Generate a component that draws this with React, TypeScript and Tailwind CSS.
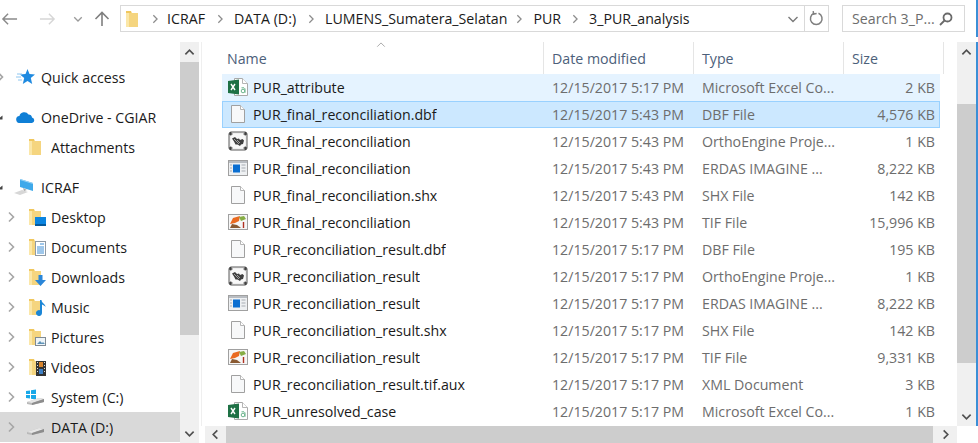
import React from 'react';

const files = [
  { name: 'PUR_attribute', date: '12/15/2017 5:17 PM', type: 'Microsoft Excel Co...', size: '2 KB', icon: 'xls' },
  { name: 'PUR_final_reconciliation.dbf', date: '12/15/2017 5:43 PM', type: 'DBF File', size: '4,576 KB', icon: 'doc' },
  { name: 'PUR_final_reconciliation', date: '12/15/2017 5:43 PM', type: 'OrthoEngine Proje...', size: '1 KB', icon: 'ortho' },
  { name: 'PUR_final_reconciliation', date: '12/15/2017 5:43 PM', type: 'ERDAS IMAGINE ...', size: '8,222 KB', icon: 'erdas' },
  { name: 'PUR_final_reconciliation.shx', date: '12/15/2017 5:43 PM', type: 'SHX File', size: '142 KB', icon: 'doc' },
  { name: 'PUR_final_reconciliation', date: '12/15/2017 5:43 PM', type: 'TIF File', size: '15,996 KB', icon: 'tif' },
  { name: 'PUR_reconciliation_result.dbf', date: '12/15/2017 5:17 PM', type: 'DBF File', size: '195 KB', icon: 'doc' },
  { name: 'PUR_reconciliation_result', date: '12/15/2017 5:17 PM', type: 'OrthoEngine Proje...', size: '1 KB', icon: 'ortho' },
  { name: 'PUR_reconciliation_result', date: '12/15/2017 5:17 PM', type: 'ERDAS IMAGINE ...', size: '8,222 KB', icon: 'erdas' },
  { name: 'PUR_reconciliation_result.shx', date: '12/15/2017 5:17 PM', type: 'SHX File', size: '142 KB', icon: 'doc' },
  { name: 'PUR_reconciliation_result', date: '12/15/2017 5:17 PM', type: 'TIF File', size: '9,331 KB', icon: 'tif' },
  { name: 'PUR_reconciliation_result.tif.aux', date: '12/15/2017 5:17 PM', type: 'XML Document', size: '3 KB', icon: 'doc' },
  { name: 'PUR_unresolved_case', date: '12/15/2017 5:17 PM', type: 'Microsoft Excel Co...', size: '1 KB', icon: 'xls' },
];

const Chev = ({ dir, color = '#7a7a7a', size = 12, width = 1.5 }: { dir: 'left' | 'right' | 'up' | 'down'; color?: string; size?: number; width?: number }) => {
  const d = { right: 'M4 1.5 8.5 6 4 10.5', left: 'M8 1.5 3.5 6 8 10.5', up: 'M1.5 8 6 3.5 10.5 8', down: 'M1.5 4 6 8.5 10.5 4' }[dir];
  return (
    <svg width={size} height={size} viewBox="0 0 12 12" fill="none" stroke={color} strokeWidth={width} className="shrink-0">
      <path d={d} />
    </svg>
  );
};

const FileIcon = ({ kind }: { kind: string }) => {
  if (kind === 'doc') {
    return (
      <svg width="18" height="20" viewBox="0 0 18 20">
        <path d="M2.500 1.500h9l4 4v13h-13z" fill="#f7f8f9" stroke="#a0a0a0" />
        <path d="M11.500 1.500v4h4" fill="#fff" stroke="#b5b5b5" />
      </svg>
    );
  }
  if (kind === 'xls') {
    return (
      <svg width="22" height="20" viewBox="0 0 22 20">
        <path d="M7.500 1.500h8l5 5v12h-13z" fill="#fff" stroke="#a9a9a9" />
        <path d="M15.500 1.500v5h5" fill="#fff" stroke="#b5b5b5" />
        <path d="M1 4l11-1.500v15L1 16z" fill="#1e7145" />
        <path d="M4 7l4 6M8 7l-4 6" stroke="#fff" strokeWidth="1.400" />
        <circle cx="16" cy="14" r="1.800" fill="none" stroke="#6cb58d" />
        <path d="M14.500 10.800h2.500l1 1v4" fill="none" stroke="#6cb58d" />
      </svg>
    );
  }
  if (kind === 'ortho') {
    return (
      <svg width="20" height="20" viewBox="0 0 20 20">
        <rect x="1" y="1" width="18" height="18" rx="2" fill="#eeeeee" stroke="#5a5a5a" />
        <rect x="3" y="3" width="14" height="14" fill="#f8f8f8" />
        <path d="M4 7.500l3-1.500 2 2 2-.5 1 1.500 2.500-1 1.500 1.500-1 3.500-2 .5-1 1.500-2.500-1.500-2 0-1.500-3z" fill="#3f3f3f" />
        <path d="M6 8l5 5M9 9l3 3" stroke="#b8b8b8" strokeWidth=".8" />
        <path d="M1 3h3.500M2.800 1v3.500M15.500 3H19M17.200 1v3.500M1 17h3.500M2.800 15.500V19M15.500 17H19M17.200 15.500V19" stroke="#222" />
      </svg>
    );
  }
  if (kind === 'erdas') {
    return (
      <svg width="20" height="16" viewBox="0 0 20 16">
        <rect x=".5" y=".5" width="19" height="15" fill="#eef0f2" stroke="#a0a0a0" />
        <rect x="1" y="1" width="18" height="2" fill="#b9bdc2" />
        <rect x="5" y="4.500" width="7" height="8" fill="#0a6ed1" />
        <path d="M2 5h2M2 8h2M2 11h2M13.500 5h4M13.500 8h4M13.500 11h4" stroke="#a8adb3" />
      </svg>
    );
  }
  return (
    <svg width="20" height="16" viewBox="0 0 20 16">
      <rect x=".5" y=".5" width="19" height="15" fill="#f6f6f6" stroke="#a0a0a0" />
      <path d="M2 10l3-6 7-2-1 5-4 2z" fill="#ea6a20" />
      <path d="M11 3l5-1 2 3-5 2z" fill="#86ad45" />
      <path d="M2 14l2-4 5 1 4 3z" fill="#8a5a32" />
      <path d="M15.500 8v6" stroke="#b03020" strokeWidth="1.400" />
    </svg>
  );
};

const Folder = () => (
  <svg width="14" height="18" viewBox="0 0 14 18" className="shrink-0">
    <path d="M0 1h5l1 2h6v14H0z" fill="#f5d57f" />
    <path d="M0 3h3v14H0z" fill="#fbe7a8" />
    <path d="M0 1h5v2H0z" fill="#f0c75e" />
  </svg>
);

const NavIcon = ({ overlay }: { overlay: React.ReactNode }) => (
  <div className="relative w-[16px] h-[18px]">
    <Folder />
    <div className="absolute right-[-1px] bottom-0">{overlay}</div>
  </div>
);

const overlays: Record<string, React.ReactNode> = {
  Desktop: (
    <svg width="11" height="9" viewBox="0 0 11 9"><rect width="11" height="8" fill="#0a84e0" /><rect y="7" width="11" height="2" fill="#055a9c" /></svg>
  ),
  Documents: (
    <svg width="11" height="15" viewBox="0 0 11 15"><rect x=".5" y=".5" width="10" height="14" fill="#fff" stroke="#8f9aa5" /><path d="M5 3h4M2 6h7M2 8h7M2 10h7M2 12h7" stroke="#3f8fd6" /></svg>
  ),
  Downloads: (
    <svg width="11" height="11" viewBox="0 0 11 11"><path d="M3.500 0h4v5H11L5.500 11 0 5h3.500z" fill="#2a86d8" /></svg>
  ),
  Music: (
    <svg width="10" height="17" viewBox="0 0 10 17"><path d="M4 1h1.500c0 3 4 4 4 7-1-1.500-2-2-3.500-2.500V14a3 3 0 1 1-2-2.800z" fill="#1b86d6" /></svg>
  ),
  Pictures: (
    <svg width="11" height="9" viewBox="0 0 11 9"><rect x=".5" y=".5" width="10" height="8" fill="#eef4f8" stroke="#7f8a94" /><path d="M2 7l3-3 2 2 1-1 2 2z" fill="#5f93b8" /></svg>
  ),
  Videos: (
    <svg width="10" height="15" viewBox="0 0 10 15"><rect width="10" height="15" fill="#333" /><path d="M1 1h1v1H1zM8 1h1v1H8zM1 4h1v1H1zM8 4h1v1H8zM1 7h1v1H1zM8 7h1v1H8zM1 10h1v1H1zM8 10h1v1H8z" fill="#ddd" /><rect x="3" y="1" width="4" height="5" fill="#d8842c" /><rect x="3" y="8" width="4" height="5" fill="#3d7fc4" /></svg>
  ),
};

const Drive = ({ windows }: { windows?: boolean }) => (
  <svg width="20" height="18" viewBox="0 0 20 18" className="shrink-0">
    {windows && <path d="M1 3l4-.6V6H1zM6 2.300l5-.8V6H6zM1 7h4v3.600l-4-.6zM6 7h5v4.500l-5-.8z" fill="#19a8e8" />}
    <path d="M2 14l12-4 5 1v3l-12 3-5-1z" fill="#b9b9b9" />
    <path d="M2 14l5 1 12-4-5-1z" fill="#e6e6e6" />
    <path d="M7 15v2l12-3v-3z" fill="#8d8d8d" />
  </svg>
);

const SideRow = ({ label, level, icon, chev, selected, mt }: { label: string; level: 0 | 1; icon: React.ReactNode; chev?: 'right' | 'open'; selected?: boolean; mt?: boolean }) => (
  <div className={`flex items-center h-[30px] ${mt ? 'mt-[10px]' : ''} ${selected ? 'bg-[#d9d9d9]' : ''}`}>
    <div className={`flex items-center justify-center shrink-0 ${level === 0 ? 'w-[6px] ml-[-3px]' : 'w-[12px] ml-[5px]'}`}>
      {chev === 'right' && <Chev dir="right" color="#a6a6a6" size={12} width={1.6} />}
      {chev === 'open' && (
        <svg width="7" height="7" viewBox="0 0 7 7" className="shrink-0"><path d="M.5 5.500l5-4v4z" fill="#444" /></svg>
      )}
    </div>
    <div className={`flex items-center shrink-0 ${level === 0 ? 'w-[38px] pl-[13px]' : 'w-[34px] pl-[12px]'}`}>{icon}</div>
    <span className="truncate pt-[2px]">{label}</span>
  </div>
);

const App = () => {
  return (
    <div
      className="w-[978px] h-[443px] bg-white overflow-hidden flex flex-col text-[14.2px] text-[#1a1a1a]"
      style={{ fontFamily: '"Open Sans", "Noto Sans", sans-serif' }}
    >
      {/* toolbar */}
      <div className="h-[42px] flex items-start pt-[5px] shrink-0">
        <div className="w-[120px] h-[27px] flex items-center shrink-0">
          <svg width="17" height="14" viewBox="0 0 18 14" className="ml-[1px]" fill="none" stroke="#8a8a8a" strokeWidth="1.500"><path d="M17 7H2M7.500 1.500 2 7l5.500 5.500" /></svg>
          <svg width="17" height="14" viewBox="0 0 18 14" className="ml-[21px]" fill="none" stroke="#d6d6d6" strokeWidth="1.500"><path d="M1 7h15M10.500 1.500 16 7l-5.500 5.500" /></svg>
          <div className="ml-[17px]"><Chev dir="down" color="#9a9a9a" size={10} width={1.6} /></div>
          <svg width="16" height="16" viewBox="0 0 16 16" className="ml-[11px]" fill="none" stroke="#7f7f7f" strokeWidth="1.600"><path d="M8 15V2M1.500 8 8 1.500 14.500 8" /></svg>
        </div>
        <div className="w-[709px] h-[27px] border border-[#d9d9d9] flex items-center shrink-0">
          <div className="ml-[5px] w-[12px]"><Folder /></div>
          <div className="ml-[12px]"><Chev dir="right" color="#8c8c8c" size={10} width={1.500} /></div>
          <span className="ml-[7px]">ICRAF</span>
          <div className="ml-[10px]"><Chev dir="right" color="#8c8c8c" size={10} width={1.500} /></div>
          <span className="ml-[9px]">DATA (D:)</span>
          <div className="ml-[10px]"><Chev dir="right" color="#8c8c8c" size={10} width={1.500} /></div>
          <span className="ml-[9px]">LUMENS_Sumatera_Selatan</span>
          <div className="ml-[7px]"><Chev dir="right" color="#8c8c8c" size={10} width={1.500} /></div>
          <span className="ml-[9px]">PUR</span>
          <div className="ml-[9px]"><Chev dir="right" color="#8c8c8c" size={10} width={1.500} /></div>
          <span className="ml-[9px]">3_PUR_analysis</span>
          <div className="ml-auto mr-[5px]"><Chev dir="down" color="#7a7a7a" size={12} width={1.4} /></div>
          <div className="w-[24px] h-full border-l border-[#d9d9d9] flex items-center justify-center">
            <svg width="15" height="15" viewBox="0 0 15 15" fill="none" stroke="#7f7f7f" strokeWidth="1.500">
              <path d="M9.500 2.300a5.800 5.800 0 1 1-4.500 0" />
              <path d="M4.500 0v3h3" transform="rotate(-10 5 2)" />
            </svg>
          </div>
        </div>
        <div className="ml-[13px] w-[123px] h-[27px] border border-[#d9d9d9] flex items-center pl-[9px] text-[#6d6d6d] shrink-0">
          <span>Search 3_P...</span>
          <svg width="14" height="14" viewBox="0 0 14 14" className="ml-auto mr-[11px]" fill="none" stroke="#6a6a6a" strokeWidth="1.800"><circle cx="8.500" cy="5.500" r="4" /><path d="M5.500 8.500 1 13" /></svg>
        </div>
        <div className="ml-auto w-[2px] h-[37px] mt-[-5px] bg-[#3c8fd6]" />
      </div>

      <div className="flex-1 flex min-h-0">
        {/* nav pane */}
        <div className="w-[180px] shrink-0 pt-[20px] overflow-hidden">
          <SideRow
            label="Quick access"
            level={0}
            chev="right"
            icon={
              <svg width="19" height="18" viewBox="0 0 19 18"><path d="M11.500 1l2 5 5.500.4-4.200 3.500L16.200 16l-4.700-3-4.700 3 1.400-6.100L4 6.400 9.500 6z" fill="#1f8ae0" /><path d="M1 6h5M0 9h5M2 12h4" stroke="#8ec6f0" /></svg>
            }
          />
          <SideRow
            label="OneDrive - CGIAR"
            level={0}
            chev="open"
            mt
            icon={
              <svg width="19" height="12" viewBox="0 0 19 12"><path d="M4 12a3.500 3.500 0 0 1-.6-7A5 5 0 0 1 12.500 3.500 3.500 3.500 0 0 1 16 6.500 2.800 2.800 0 0 1 16 12z" fill="#0f7fd6" /></svg>
            }
          />
          <SideRow label="Attachments" level={1} icon={<Folder />} />
          <SideRow
            label="ICRAF"
            level={0}
            chev="open"
            mt
            icon={
              <svg width="20" height="18" viewBox="0 0 20 18" className="ml-[-2px]"><path d="M6 1l13 4v8L6 9z" fill="#3fa9ea" /><path d="M6 1l13 4v1L6 2z" fill="#9ad3f5" /><path d="M0 15l8-3 6 2-8 3z" fill="#d7d7d7" /><path d="M9 10l4 2-3 1z" fill="#a9a9a9" /></svg>
            }
          />
          {['Desktop', 'Documents', 'Downloads', 'Music', 'Pictures', 'Videos'].map((n) => (
            <SideRow key={n} label={n} level={1} chev="right" icon={<NavIcon overlay={overlays[n]} />} />
          ))}
          <SideRow label="System (C:)" level={1} chev="right" icon={<div className="ml-[-4px]"><Drive windows /></div>} />
          <SideRow label="DATA (D:)" level={1} chev="right" selected icon={<div className="ml-[-4px]"><Drive /></div>} />
        </div>

        {/* nav scrollbar */}
        <div className="w-[19px] shrink-0 bg-[#f0f0f0] flex flex-col">
          <div className="h-[20px] flex items-center justify-center"><Chev dir="up" color="#505050" size={11} width={1.8} /></div>
          <div className="h-[273px] bg-[#cdcdcd]" />
          <div className="flex-1" />
          <div className="h-[20px] flex items-center justify-center"><Chev dir="down" color="#505050" size={11} width={1.8} /></div>
        </div>

        {/* file list */}
        <div className="flex-1 min-w-0 flex flex-col">
          <div className="flex-1 min-h-0 flex">
            <div className="w-[735px] ml-[2px] border-l border-[#efefef] pl-[20px] shrink-0 box-content">
              <div className="h-[32px] flex text-[#4c607a] relative">
                <div className="w-[322px] pl-[5px] pt-[6px] border-r border-[#e5e5e5]">Name</div>
                <div className="w-[150px] pl-[8px] pt-[6px] border-r border-[#e5e5e5]">Date modified</div>
                <div className="w-[150px] pl-[8px] pt-[6px] border-r border-[#e5e5e5]">Type</div>
                <div className="w-[100px] pl-[8px] pt-[6px] border-r border-[#e5e5e5]">Size</div>
                <div className="absolute left-[154px] top-[-2px]"><Chev dir="up" color="#9a9a9a" size={10} width={1} /></div>
              </div>
              <div className="w-[718px]">
                {files.map((f, i) => (
                  <div
                    key={i}
                    className={`h-[27px] flex items-center border ${i === 1 ? 'bg-[#cce8ff] border-[#99d1ff]' : i === 0 ? 'bg-[#e5f3ff] border-[#e5f3ff]' : 'border-transparent'}`}
                  >
                    <div className="w-[321px] flex items-center shrink-0">
                      <div className="w-[31px] flex items-center justify-center shrink-0 ml-[-1px]"><FileIcon kind={f.icon} /></div>
                      <span className="truncate">{f.name}</span>
                    </div>
                    <div className="w-[150px] pl-[8px] text-[#6d6d6d] shrink-0">{f.date}</div>
                    <div className="w-[150px] pl-[8px] text-[#6d6d6d] shrink-0">{f.type}</div>
                    <div className="w-[91px] text-right text-[#6d6d6d] shrink-0">{f.size}</div>
                  </div>
                ))}
              </div>
            </div>
            <div className="w-[19px] shrink-0 bg-[#f0f0f0] flex flex-col">
              <div className="h-[20px] flex items-center justify-center"><Chev dir="up" color="#505050" size={11} width={1.8} /></div>
              <div className="h-[42px]" />
              <div className="h-[259px] bg-[#cdcdcd]" />
              <div className="flex-1" />
              <div className="h-[20px] flex items-center justify-center"><Chev dir="down" color="#505050" size={11} width={1.8} /></div>
            </div>
            <div className="w-[2px] bg-[#3c8fd6]" />
          </div>
          <div className="h-[17px] shrink-0 flex pl-[6px] pr-[21px]">
            <div className="w-[21px] bg-[#f0f0f0] flex items-center justify-center"><Chev dir="left" color="#505050" size={11} width={1.8} /></div>
            <div className="flex-1 bg-[#cdcdcd]" />
            <div className="w-[24px] bg-[#f0f0f0] flex items-center justify-center"><Chev dir="right" color="#505050" size={11} width={1.8} /></div>
          </div>
        </div>
      </div>
    </div>
  );
};

export default App;
